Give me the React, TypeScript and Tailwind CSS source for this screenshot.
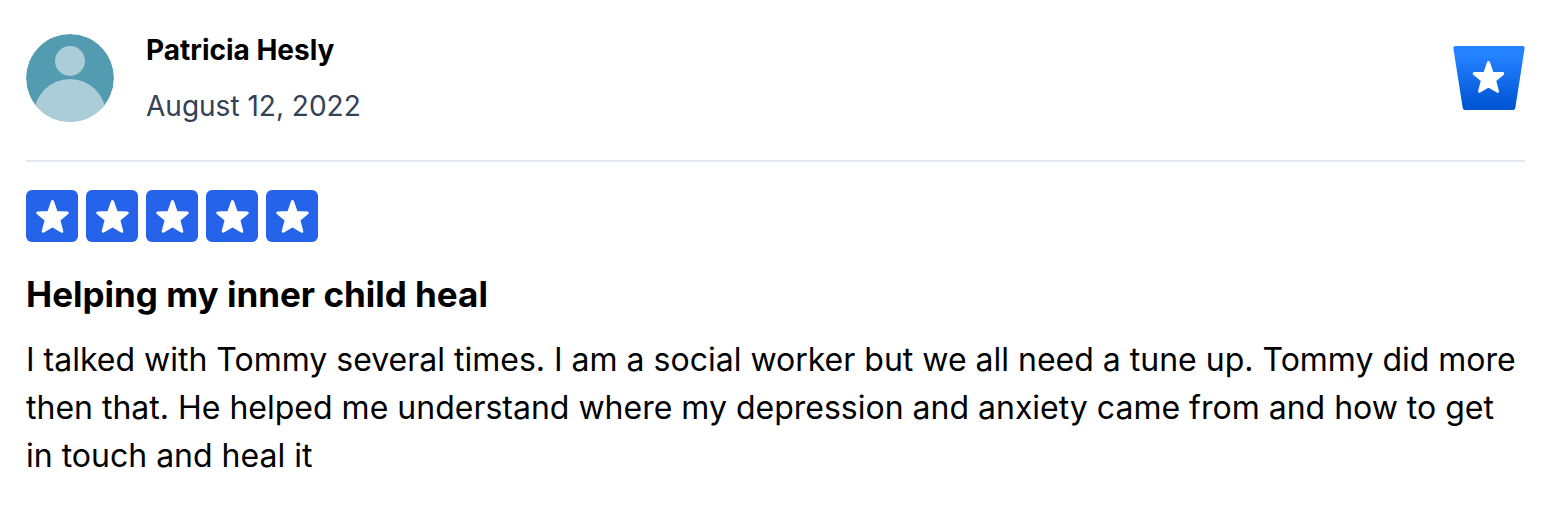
import { useId } from 'react'

const review = {
  author: 'Patricia Hesly',
  date: 'August 12, 2022',
  rating: 5,
  title: 'Helping my inner child heal',
  body: 'I talked with Tommy several times. I am a social worker but we all need a tune up. Tommy did more then that. He helped me understand where my depression and anxiety came from and how to get in touch and heal it',
}

export default function App() {
  return (
    <article className="min-h-screen bg-white pt-[22px] pb-[38px] pl-[26px] pr-[37px] font-['Inter',sans-serif] text-black">
      {/* Author */}
      <header className="flex items-center justify-between border-b-2 border-[#e2e8f0] pb-[26px]">
        <div className="flex items-center gap-8">
          <Avatar />
          <div className="text-[28px] leading-[56px]">
            <h2 className="font-bold">{review.author}</h2>
            <p className="text-[#334155]">{review.date}</p>
          </div>
        </div>
        <Badge />
      </header>

      {/* Review */}
      <div className="pt-7">
        <Rating value={review.rating} />
        <h3 className="mt-7 text-[35px] leading-[48px] font-bold">{review.title}</h3>
        <p className="mt-[18px] text-[32px] leading-[48px]">{review.body}</p>
      </div>
    </article>
  )
}

function Avatar() {
  return (
    <svg viewBox="0 0 88 88" className="size-[88px] shrink-0 rounded-full" aria-hidden="true">
      <circle cx="44" cy="44" r="44" fill="#529bb0" />
      <circle cx="44" cy="27" r="15" fill="#abcdd7" />
      <circle cx="44" cy="81" r="36" fill="#abcdd7" />
    </svg>
  )
}

function Badge() {
  const id = useId()

  return (
    <svg viewBox="0 0 72 64" className="h-16 w-[72px] shrink-0" aria-hidden="true">
      <defs>
        <linearGradient id={id} x1="0" y1="0" x2="0" y2="1">
          <stop offset="0.15" stopColor="#2481ff" />
          <stop offset="0.95" stopColor="#0055d4" />
        </linearGradient>
      </defs>
      <path
        d="M2.500 0H69.500Q72 0 71.600 2.500L62.300 62Q62 64 60 64H12Q10 64 9.700 62L0.400 2.500Q0 0 2.500 0Z"
        fill={`url(#${id})`}
      />
      <StarShape transform="translate(19.500 15) scale(0.970)" />
    </svg>
  )
}

function Rating({ value }: { value: number }) {
  return (
    <div className="flex gap-2" role="img" aria-label={`${value} / 5`}>
      {Array.from({ length: value }, (_, i) => (
        <svg key={i} viewBox="0 0 52 52" className="size-[52px] rounded-md bg-[#2563eb]">
          <StarShape transform="translate(10 10)" />
        </svg>
      ))}
    </div>
  )
}

function StarShape({ transform }: { transform: string }) {
  return (
    <path
      transform={transform}
      d="M16.500 1.600L20.300 12.500L31.300 12.900L22.800 19.900L25.800 31.300L16.500 25.800L7.200 31.300L10.200 19.900L1.700 12.900L12.700 12.500Z"
      fill="white"
      stroke="white"
      strokeWidth="3"
      strokeLinejoin="round"
    />
  )
}
